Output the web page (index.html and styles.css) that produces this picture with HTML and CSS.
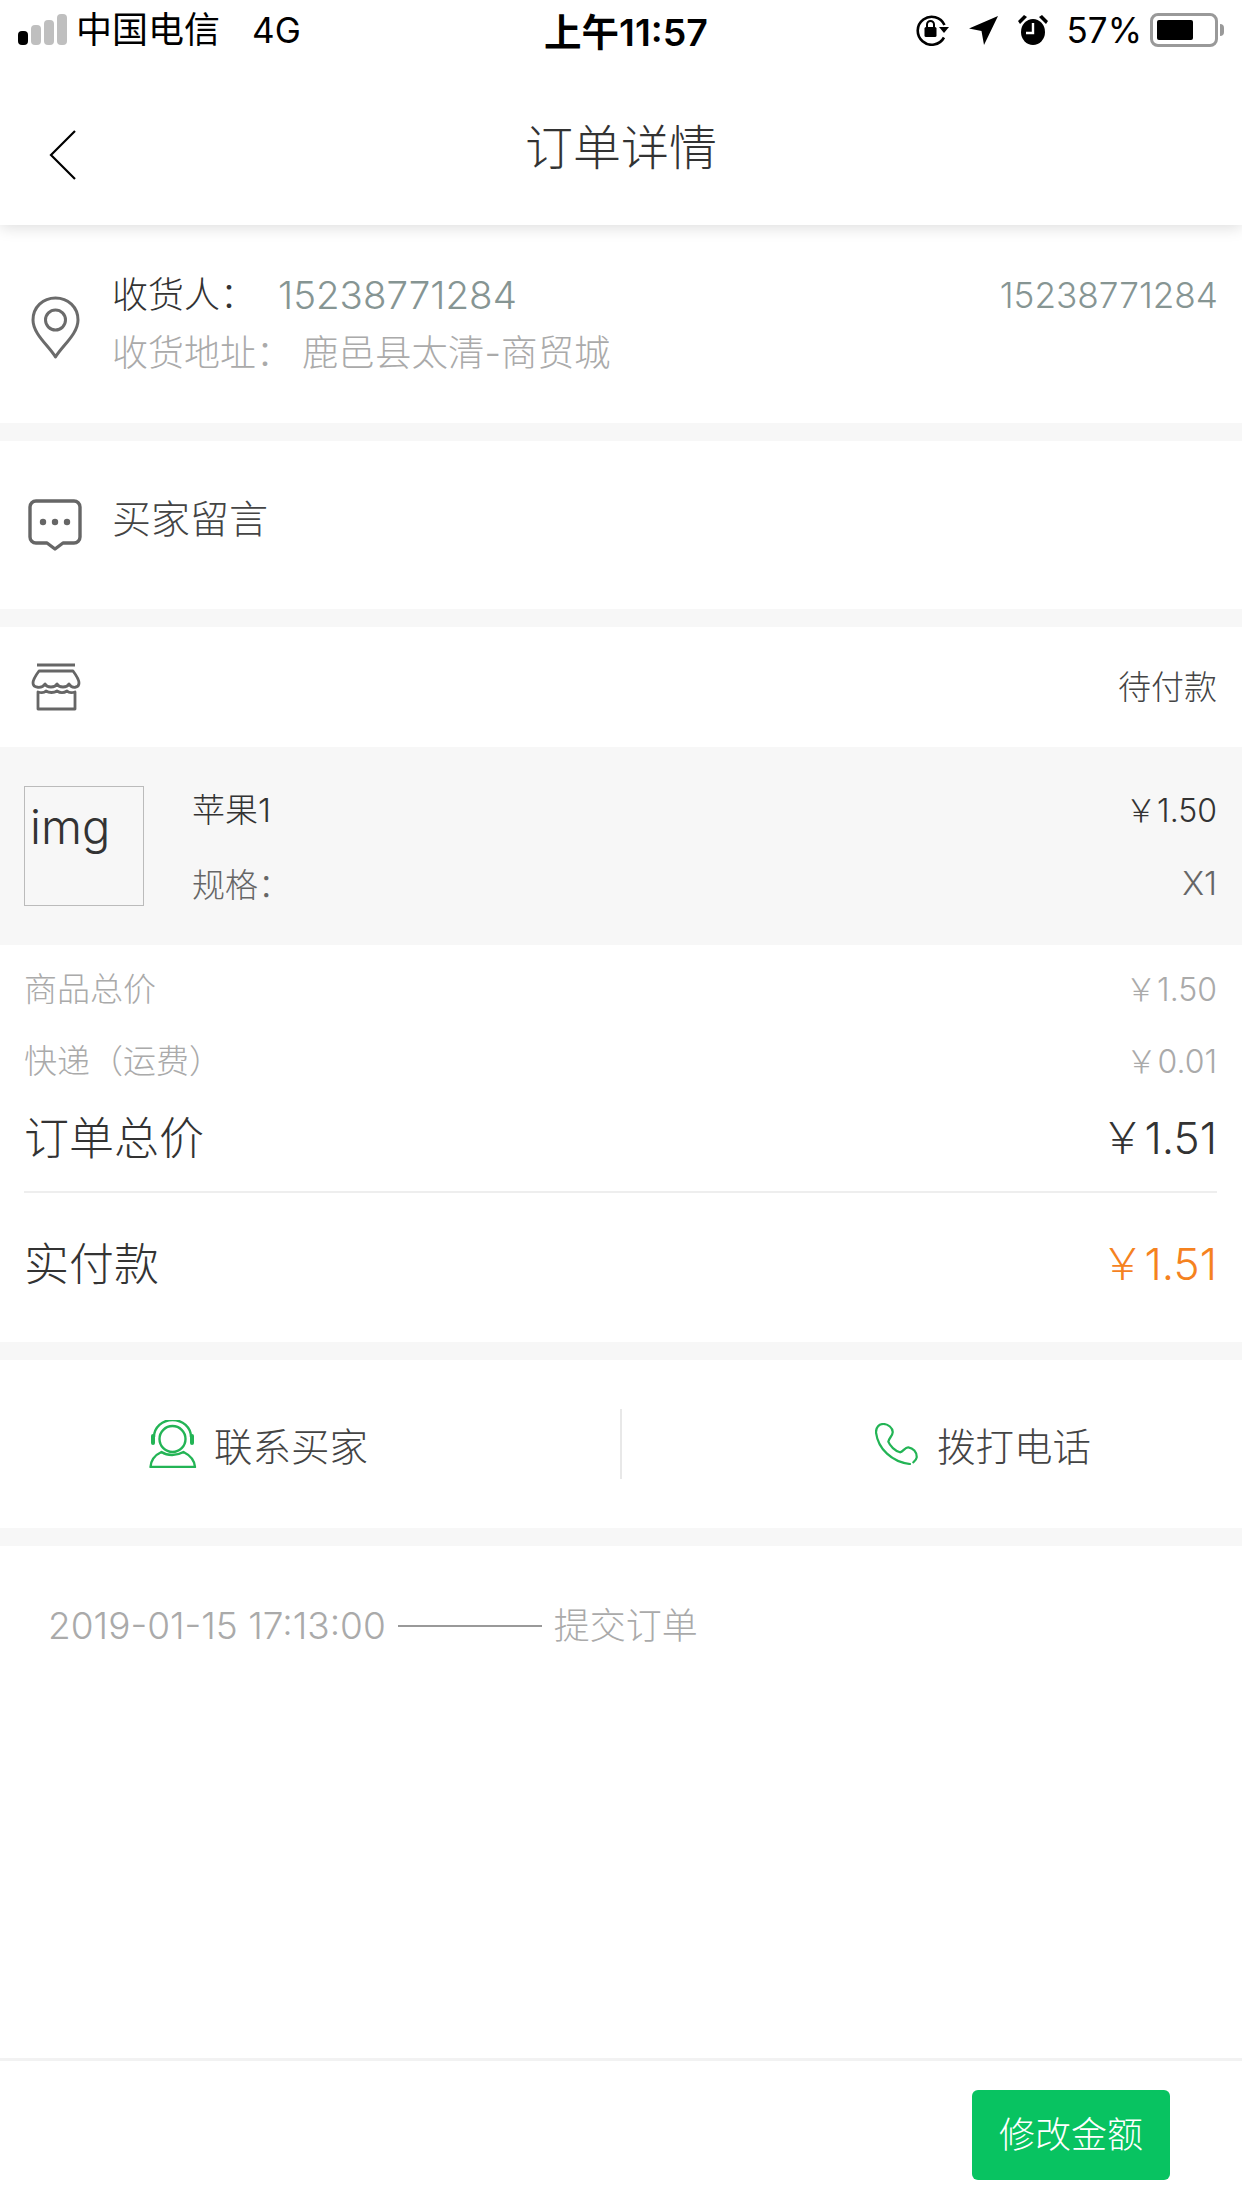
FILE: index.html
```html
<!DOCTYPE html>
<html lang="zh-CN">
<head>
<meta charset="utf-8">
<title>订单详情</title>
<link rel="stylesheet" href="styles.css">
</head>
<body>
<div class="page">
  <header class="top">
    <div class="status">
      <div class="st-left">
        <svg class="signal" width="50" height="32" viewBox="0 0 50 32"><rect x="0" y="17" width="10" height="14" rx="4" fill="#000"/><rect x="13" y="11" width="10" height="20" rx="4" fill="#bfbfbf"/><rect x="26" y="6" width="10" height="25" rx="4" fill="#bfbfbf"/><rect x="39" y="0" width="10" height="31" rx="4" fill="#bfbfbf"/></svg>
        <span class="carrier">中国电信</span>
        <span class="net">4G</span>
      </div>
      <div class="st-time">上午11:57</div>
      <div class="st-right">
        <svg class="ic-lock" width="36" height="32" viewBox="0 0 36 32"><path d="M29 23.500A14 14 0 1 1 29.500 11" fill="none" stroke="#000" stroke-width="2.600"/><path d="M24 13h10l-5 6z" fill="#000"/><rect x="9.500" y="13" width="12" height="10" rx="1.500" fill="#000"/><path d="M12 13V10.500a3.500 3.500 0 0 1 7 0V13" fill="none" stroke="#000" stroke-width="2"/></svg>
        <svg class="ic-loc" width="30" height="30" viewBox="0 0 30 30"><path d="M29 1 15 30l-2.500-14L0 13.500z" fill="#000"/></svg>
        <svg class="ic-alarm" width="32" height="32" viewBox="0 0 32 32"><ellipse cx="16" cy="18" rx="12" ry="13" fill="#000"/><path d="M1 7 7 1l3 2-7 7zM31 7l-6-6-3 2 7 7z" fill="#000"/><path d="M16 9v10h-7" fill="none" stroke="#fff" stroke-width="2.400"/></svg>
        <span class="pct">57%</span>
        <div class="battery"><div class="battery-fill"></div></div>
        <div class="battery-nub"></div>
      </div>
    </div>
    <nav class="nav">
      <svg class="back" width="28" height="50" viewBox="0 0 28 50"><path d="M26 1 2 25l24 24" fill="none" stroke="#000" stroke-width="2.200"/></svg>
      <h1 class="title">订单详情</h1>
    </nav>
  </header>

  <section class="receiver">
    <svg class="pin" width="49" height="64" viewBox="0 0 49 64"><path d="M24.500 61 C18 50 2 38 2 24 C2 11 12 2 24.500 2 C37 2 47 11 47 24 C47 38 31 50 24.500 61Z" fill="none" stroke="#6b6b6b" stroke-width="3" stroke-linejoin="round"/><circle cx="24.500" cy="24" r="10" fill="none" stroke="#6b6b6b" stroke-width="3"/></svg>
    <div class="rc-main">
      <div class="rc-row"><span class="rc-name">收货人：</span><span class="rc-phone">15238771284</span></div>
      <div class="rc-row rc-addr"><span class="rc-addr-label">收货地址：</span><span class="rc-addr-val">鹿邑县太清-商贸城</span></div>
    </div>
    <span class="rc-phone2">15238771284</span>
  </section>

  <section class="message">
    <svg class="chat" width="54" height="52" viewBox="0 0 54 52"><path d="M8 2h38a6 6 0 0 1 6 6v30a6 6 0 0 1-6 6H35l-8 6-8-6H8a6 6 0 0 1-6-6V8a6 6 0 0 1 6-6Z" fill="none" stroke="#666" stroke-width="3.400" stroke-linejoin="round"/><circle cx="15" cy="23" r="3.200" fill="#666"/><circle cx="27" cy="23" r="3.200" fill="#666"/><circle cx="39" cy="23" r="3.200" fill="#666"/></svg>
    <span class="message-text">买家留言</span>
  </section>

  <section class="order">
    <div class="store">
      <svg class="shop" width="50" height="48" viewBox="0 0 50 48"><path d="M6 2h38" stroke="#666" stroke-width="3" fill="none"/><path d="M8 8h34c3 4 6 8 6 12 0 5-7 6-10 1-2 4-10 4-12 0-2 4-10 4-12 0-3 5-12 4-12-1 0-4 3-8 6-12Z" fill="none" stroke="#666" stroke-width="2.800" stroke-linejoin="round"/><path d="M7 29v17h37V29c-3 1-6 1-8-1-3 2-7 2-10 0-3 2-8 2-11 0-2 2-5 2-8 1Z" fill="none" stroke="#666" stroke-width="2.800" stroke-linejoin="round"/></svg>
      <span class="store-state">待付款</span>
    </div>
    <div class="goods">
      <div class="thumb">img</div>
      <div class="goods-info">
        <div class="goods-row goods-main"><span>苹果1</span><span class="goods-amount">￥1.50</span></div>
        <div class="goods-row goods-sub"><span>规格：</span><span>X1</span></div>
      </div>
    </div>
    <div class="totals">
      <div class="t-row t-small"><span>商品总价</span><span class="t-amount">￥1.50</span></div>
      <div class="t-row t-small"><span>快递（运费）</span><span class="t-amount">￥0.01</span></div>
      <div class="t-row t-big t-sum"><span>订单总价</span><span class="t-amount">￥1.51</span></div>
      <div class="t-row t-big t-pay"><span>实付款</span><span class="t-amount t-orange">￥1.51</span></div>
    </div>
  </section>

  <section class="actions">
    <div class="action action-l">
      <svg width="48" height="48" viewBox="0 0 48 48"><circle cx="23.500" cy="19" r="13" fill="none" stroke="#23b455" stroke-width="2.400"/><path d="M5 17A18.500 17 0 0 1 42 17" fill="none" stroke="#23b455" stroke-width="2.400"/><rect x="2" y="14" width="4" height="11" rx="2" fill="#23b455"/><rect x="41" y="14" width="4" height="11" rx="2" fill="#23b455"/><path d="M1.500 47C2 40 6 35 12.500 32c6 4 15 4 22 0 6 3 11 8 11.500 15Z" fill="none" stroke="#23b455" stroke-width="2.400" stroke-linejoin="round"/></svg>
      <span>联系买家</span>
    </div>
    <div class="divider"></div>
    <div class="action action-r">
      <svg width="44" height="42" viewBox="0 0 44 42"><path d="M35 41C17 39 3 26 1 9.300 1 4 4 1 8.300 1 13 1 18 5 17.700 9.300 17.500 13 14 15 13.300 18.700 15 23 20 28 25 29.300 28 29 30 24 33.300 24.300 38 25 42 29 41.700 34.300 41.500 36 40 38 38.300 39.300" fill="none" stroke="#23b455" stroke-width="2.200" stroke-linecap="round"/></svg>
      <span>拨打电话</span>
    </div>
  </section>

  <section class="timeline">
    <span class="tl-date">2019-01-15 17:13:00</span><span class="tl-line"></span><span>提交订单</span>
  </section>

  <footer class="footer">
    <button class="edit" type="button">修改金额</button>
  </footer>
</div>
</body>
</html>
```
FILE: styles.css
```css
* { box-sizing: border-box; margin: 0; padding: 0; }
html, body { background: #f7f7f7; }
body {
  font-family: Inter, "Noto Sans CJK SC", sans-serif;
  font-weight: 300;
  color: #333;
}
.page { width: 1242px; height: 2208px; display: flex; flex-direction: column; background: #f7f7f7; overflow: hidden; }

.top { height: 225px; background: #fff; box-shadow: 0 3px 14px rgba(0,0,0,.13); position: relative; z-index: 2; flex: none; }
.status { height: 60px; display: grid; grid-template-columns: 1fr auto 1fr; align-items: center; color: #000; padding: 0 24px 0 18px; }
.st-left { display: flex; align-items: center; font-weight: 400; }
.signal { margin-right: 8px; }
.carrier { font-size: 36px; line-height: 40px; }
.net { margin-left: 32px; font-size: 35px; }
.st-time { font-size: 37.500px; font-weight: 600; margin-left: 16px; margin-bottom: 2px; }
.st-right { display: flex; align-items: center; justify-content: flex-end; }
.ic-lock { margin-right: 18px; }
.ic-loc { margin-right: 18px; }
.ic-alarm { margin-right: 18px; }
.pct { font-size: 35px; font-weight: 400; margin-right: 8px; }
.battery { width: 68px; height: 34px; border: 3px solid #999; border-radius: 8px; padding: 4px; }
.battery-fill { width: 36px; height: 100%; background: #000; border-radius: 2px; }
.battery-nub { width: 4px; height: 12px; background: #999; border-radius: 0 4px 4px 0; margin-left: 2px; margin-right: -6px; }

.nav { height: 165px; display: flex; justify-content: center; position: relative; }
.back { position: absolute; left: 49px; top: 70px; }
.title { font-size: 48px; font-weight: 300; color: #333; line-height: 176px; height: 165px; }

.receiver { height: 198px; flex: none; background: #fff; display: flex; align-items: flex-start; padding: 41px 25px 0 31px; }
.pin { margin-top: 30px; flex: none; }
.rc-main { margin-left: 32px; flex: 1; }
.rc-row { height: 58px; line-height: 58px; display: flex; align-items: center; }
.rc-name { font-size: 36px; color: #333; width: 166px; }
.rc-phone { font-size: 38.500px; color: #869593; }
.rc-addr { font-size: 36px; color: #aaa; }
.rc-addr-label { width: 190px; }
.rc-addr-val { font-size: 36.500px; }
.rc-phone2 { font-size: 35.200px; color: #869593; line-height: 58px; margin-right: -1px; }

.message { height: 168px; flex: none; background: #fff; margin-top: 18px; display: flex; align-items: center; padding-left: 28px; }
.message-text { font-size: 39px; color: #444; margin-left: 30px; margin-top: -18px; }

.order { margin-top: 18px; flex: none; background: #fff; }
.store { height: 120px; display: flex; align-items: center; justify-content: space-between; padding: 0 25px 0 31px; }
.store-state { font-size: 33px; color: #444; margin-top: -4px; }
.goods { height: 198px; background: #f7f7f7; display: flex; padding: 39px 25px 0 24px; }
.thumb { width: 120px; height: 120px; flex: none; border: 1px solid #bbb; font-size: 47px; line-height: 80px; padding-left: 5px; color: #333; }
.goods-info { margin-left: 48px; flex: 1; margin-top: -13px; }
.goods-row { height: 74px; display: flex; align-items: center; justify-content: space-between; font-size: 33px; color: #333; }
.goods-main { padding-bottom: 5px; }
.goods-amount { font-size: 32px; }
.goods-sub { color: #666; padding-bottom: 2px; }
.totals { padding: 6px 25px 13px 24px; }
.t-row { display: flex; align-items: center; justify-content: space-between; }
.t-small { height: 72px; font-size: 33px; color: #aaa; }
.t-small .t-amount { font-size: 32px; }
.t-big { font-size: 45px; color: #333; }
.t-big .t-amount { font-size: 44px; }
.t-sum { height: 80px; margin-bottom: 16px; }
.t-pay { height: 138px; border-top: 2px solid #eee; }
.t-orange { color: #f5821f; }

.actions { height: 168px; flex: none; background: #fff; margin-top: 18px; display: flex; align-items: center; }
.action { width: 620px; flex: none; display: flex; align-items: center; font-size: 38.500px; color: #444; }
.action-l { padding-left: 149px; gap: 17px; }
.action-r { padding-left: 253px; gap: 18px; }
.divider { width: 2px; height: 70px; background: #e8e8e8; flex: none; }

.timeline { flex: 1; background: #fff; margin-top: 18px; padding: 60px 0 0 48px; display: flex; align-items: flex-start; font-size: 36px; line-height: 40px; color: #aaa; }
.tl-date { font-size: 37px; }
.tl-line { width: 144px; height: 2px; background: #999; margin: 19px 12px 0 12px; }

.footer { height: 150px; flex: none; background: #fff; border-top: 3px solid #f2f2f2; display: flex; justify-content: flex-end; padding: 29px 72px 0 0; }
.edit { width: 198px; height: 90px; background: #08c361; color: #fff; border: 0; border-radius: 6px; font: inherit; font-size: 36px; padding-bottom: 6px; }
```
